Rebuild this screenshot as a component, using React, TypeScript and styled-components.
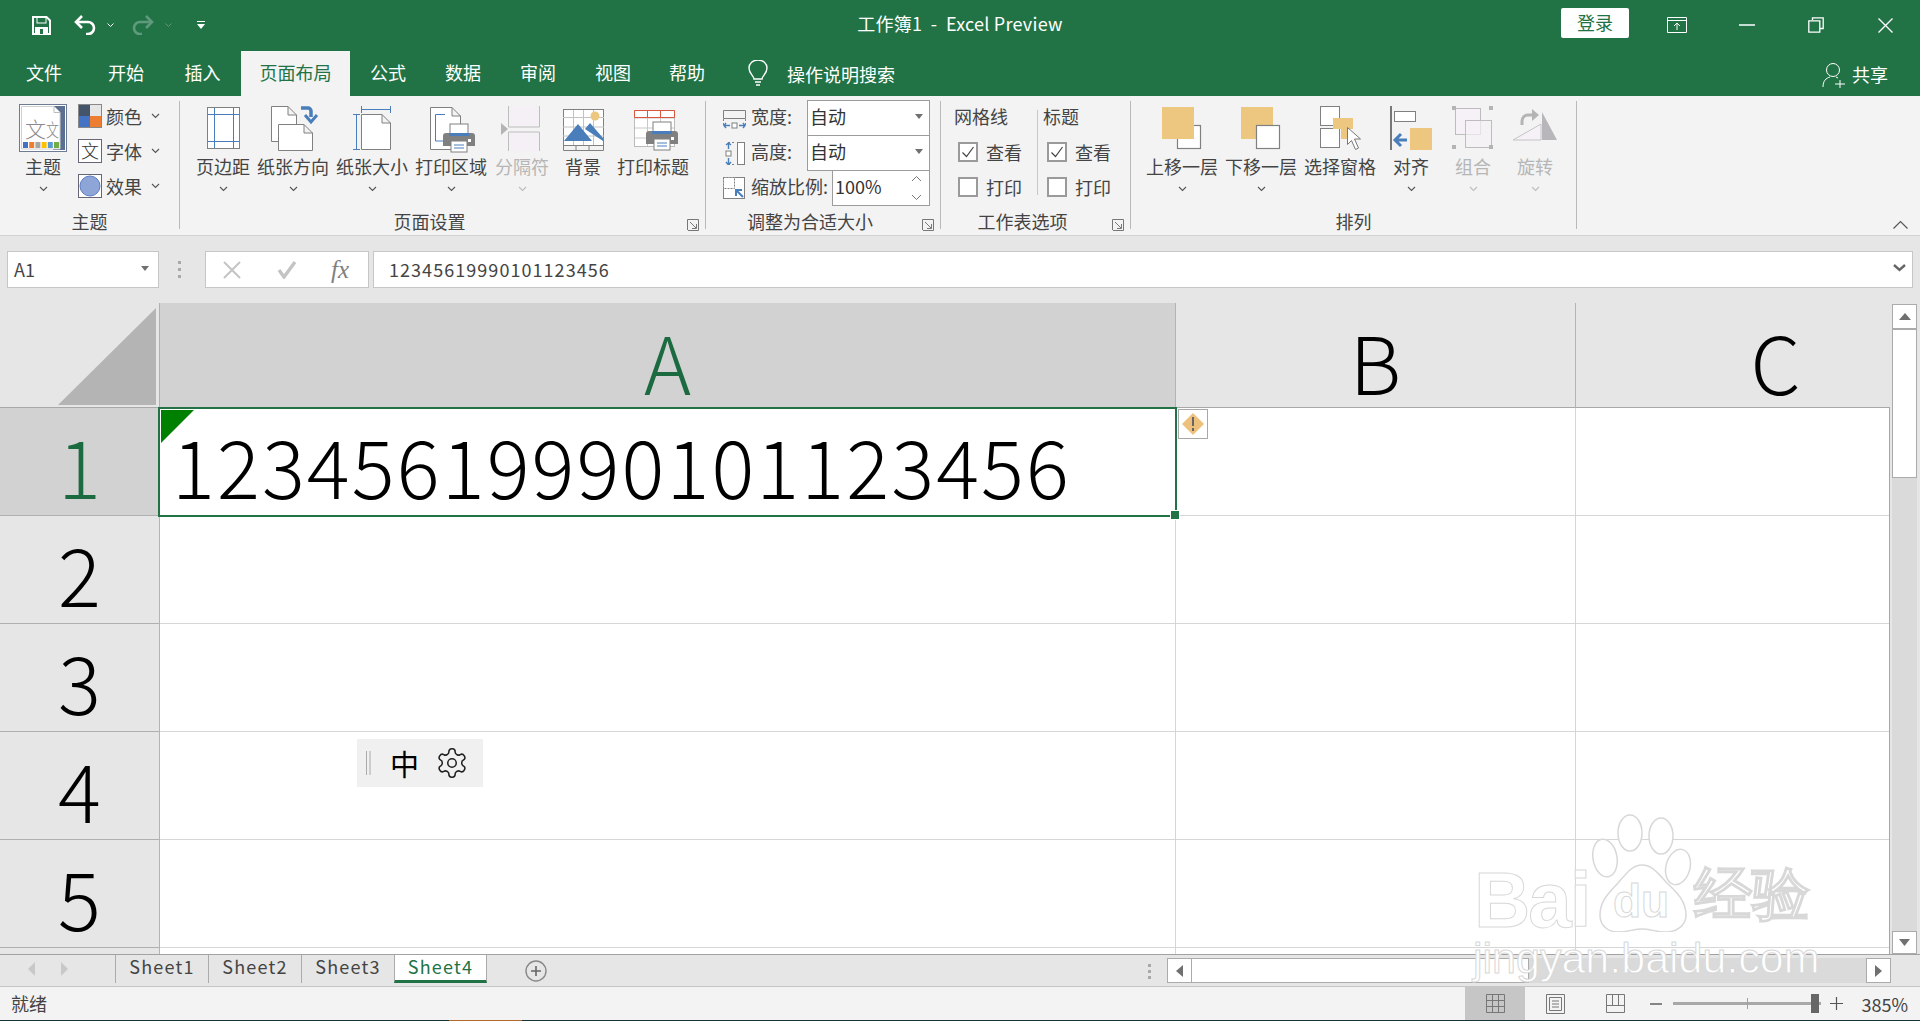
import React from "react";
import styled, { createGlobalStyle } from "styled-components";

const FONT = `"Noto Sans CJK SC", "Noto Sans", sans-serif`;
const GREEN = "#217346";

const Global = createGlobalStyle`
  html, body { margin: 0; padding: 0; overflow: hidden; background: #fff; }
  * { box-sizing: border-box; }
  body { font-family: ${FONT}; }
`;

const Page = styled.div`
  position: relative; width: 1920px; height: 1021px; display: flex; flex-direction: column; overflow: hidden;
  font-family: ${FONT}; font-size: 18px; color: #444;
`;

/* ---------- title bar ---------- */
const TitleBar = styled.div`
  height: 50px; flex: none; background: ${GREEN}; display: grid; grid-template-columns: 1fr auto 1fr; align-items: center; color: #fff;
`;
const QuickBar = styled.div`display: flex; align-items: center; padding-left: 32px; padding-top: 0;`;
const BarIcon = styled.svg<{ $ml?: number }>`display: block; flex: none; margin-left: ${p => p.$ml ?? 0}px;`;
const Title = styled.div`font-size: 18px; line-height: 24px; color: #fff; white-space: pre; margin-top: -5px; letter-spacing: .25px;`;
const WindowControls = styled.div`display: flex; align-items: center; justify-content: flex-end; padding-right: 27px;`;
const LoginButton = styled.div`
  width: 68px; height: 30px; background: #fff; border-radius: 2px; color: ${GREEN}; font-size: 18px; line-height: 29px; text-align: center; margin-top: -4px;
`;

/* ---------- tabs ---------- */
const TabBar = styled.div`height: 46px; flex: none; background: ${GREEN}; display: flex; align-items: flex-end;`;
const Tab = styled.div<{ $w: number; $active?: boolean }>`
  width: ${p => p.$w}px; height: 45px; line-height: 42px; text-align: center; font-size: 18px;
  color: ${p => (p.$active ? GREEN : "#fff")}; background: ${p => (p.$active ? "#f3f3f3" : "transparent")};
`;
const SearchHint = styled.div`display: flex; align-items: center; height: 45px; color: #fff; margin-left: 24px; line-height: 42px;`;
const SearchText = styled.span`margin-left: 19px;`;
const ShareBox = styled.div`display: flex; align-items: center; height: 45px; color: #fff; margin-left: auto; padding-right: 32px; line-height: 42px;`;
const ShareText = styled.span`margin-left: 6px;`;

/* ---------- ribbon ---------- */
const Ribbon = styled.div`
  height: 140px; flex: none; background: #f3f3f3; border-bottom: 1px solid #d2d2d2; display: flex; padding: 5px 0 6px;
`;
const Group = styled.div<{ $w: number }>`
  width: ${p => p.$w}px; flex: none; height: 128px; display: flex; flex-direction: column; border-right: 1px solid #b9b9b9;
`;
const GroupBody = styled.div<{ $pl?: number }>`
  height: 110px; flex: none; display: flex; padding-left: ${p => p.$pl ?? 0}px; padding-top: 2px;
`;
const GroupFooter = styled.div`height: 18px; display: flex; align-items: flex-start;`;
const GroupLabel = styled.div`flex: 1; text-align: center; line-height: 20px; font-size: 18px; color: #444; white-space: nowrap;`;
const Launcher = styled.svg`flex: none; display: block; margin: 8px 6px 0 8px;`;
const BigButton = styled.div<{ $w: number; $off?: boolean }>`
  width: ${p => p.$w}px; flex: none; display: flex; flex-direction: column; align-items: center;
  color: ${p => (p.$off ? "#b6b6b6" : "#444")};
`;
const BigLabel = styled.div`height: 24px; line-height: 24px; margin-top: 1px; white-space: nowrap; font-size: 18px;`;
const ChevronSlot = styled.div`height: 8px; margin-top: 7px; display: flex; align-items: center;`;
const SmallColumn = styled.div`display: flex; flex-direction: column; gap: 11px; padding-top: 1px; margin-left: -1px;`;
const SmallRow = styled.div`display: flex; align-items: center; height: 24px; white-space: nowrap;`;
const SmallText = styled.span`margin-left: 4px; width: 36px;`;
const SmallChevron = styled.span`margin-left: 9px; display: flex;`;
const FitColumn = styled.div`display: flex; flex-direction: column; width: 207px; margin-top: -3px;`;
const FitRow = styled.div`display: flex; align-items: center; height: 35px;`;
const FitLabel = styled.span`margin-left: 5px; flex: 1; white-space: nowrap; padding-bottom: 4px;`;
const SelectBox = styled.div<{ $w: number }>`
  width: ${p => p.$w}px; height: 36px; border: 1px solid #9c9c9c; background: #fff; display: flex; align-items: center; justify-content: space-between;
  padding: 0 6px 3px 2px; font-size: 18px; color: #333;
`;
const SpinArrows = styled.div`display: flex; flex-direction: column; gap: 12px; padding: 3px 1px 0 0;`;
const SheetOptionCol = styled.div<{ $w: number; $pl: number }>`
  width: ${p => p.$w}px; padding-left: ${p => p.$pl}px; display: flex; flex-direction: column;
`;
const OptionHead = styled.div`height: 24px; line-height: 24px; margin: 1px 0 6px; font-size: 18px;`;
const OptionRow = styled.div`display: flex; align-items: center; height: 35px; padding-left: 4px;`;
const CheckBox = styled.div`
  width: 20px; height: 20px; border: 2px solid #9a9a9a; background: #fff; flex: none; display: flex; align-items: center; justify-content: center;
`;
const OptionText = styled.span`margin-left: 8px;`;
const VSep = styled.div`width: 1px; height: 85px; background: #c8c8c8; margin-top: 7px; flex: none;`;
const CollapseSlot = styled.div`flex: 1; display: flex; align-items: flex-end; justify-content: flex-end; padding-right: 12px;`;

/* ---------- formula bar ---------- */
const FormulaBar = styled.div`
  height: 67px; flex: none; background: #e6e6e6; display: flex; align-items: flex-start; padding: 15px 7px 0;
`;
const NameBox = styled.div`
  width: 152px; height: 37px; background: #fff; border: 1px solid #c6c6c6; display: flex; align-items: center; justify-content: space-between;
  padding: 0 9px 2px 6px; font-size: 18px; color: #444;
`;
const Grip = styled.svg`flex: none; margin: 10px 0 0 19px; display: block;`;
const FxBox = styled.div`
  width: 164px; height: 37px; margin-left: 23px; background: #fff; border: 1px solid #c6c6c6; display: flex; align-items: center; padding-left: 17px;
`;
const GhostIcon = styled.svg<{ $ml?: number }>`display: block; flex: none; margin-left: ${p => p.$ml ?? 0}px;`;
const FxText = styled.span`
  font-family: "Liberation Serif", serif; font-style: italic; font-weight: 400; font-size: 25px; color: #808080; margin-left: 34px; line-height: 30px;
`;
const FormulaInput = styled.div`
  flex: 1; height: 37px; margin-left: 4px; background: #fff; border: 1px solid #c6c6c6; display: flex; align-items: center; justify-content: space-between;
  padding: 0 6px 2px 15px; font-size: 18px; letter-spacing: 1.05px; color: #444;
`;

/* ---------- grid ---------- */
const GridWrap = styled.div`height: 651px; flex: none; display: flex; background: #e6e6e6;`;
const SheetArea = styled.div`
  position: relative; width: 1890px; flex: none; overflow: hidden;
  &::after { content: ""; position: absolute; right: 0; top: 105px; bottom: 0; width: 1px; background: #a6a6a6; }
`;
const HeaderRow = styled.div`display: flex; height: 105px;`;
const Corner = styled.div`width: 160px; flex: none; background: #e6e6e6; border-right: 1px solid #b0b0b0; border-bottom: 1px solid #a8a8a8;`;
const CornerArt = styled.svg`display: block;`;
const ColHead = styled.div<{ $w: number; $sel?: boolean }>`
  width: ${p => p.$w}px; flex: none; background: ${p => (p.$sel ? "#d2d2d2" : "#e6e6e6")}; color: ${p => (p.$sel ? "#1c6b40" : "#000")};
  border-right: 1px solid #b4b4b4; border-bottom: 1px solid #a8a8a8; display: flex; align-items: center; justify-content: center;
  font-size: 80px; font-weight: 300; line-height: 1; padding-top: 10px;
`;
const Row = styled.div`display: flex; height: 108px;`;
const RowHead = styled.div<{ $sel?: boolean }>`
  width: 160px; flex: none; background: ${p => (p.$sel ? "#d2d2d2" : "#e6e6e6")}; color: ${p => (p.$sel ? "#1c6b40" : "#000")};
  border-right: 1px solid #b4b4b4; border-bottom: 1px solid #b0b0b0; display: flex; align-items: center; justify-content: center;
  font-size: 80px; font-weight: 300; line-height: 1; padding-top: 4px;
`;
const Cell = styled.div<{ $w: number }>`
  width: ${p => p.$w}px; flex: none; background: #fff; border-right: 1px solid #d6d6d6; border-bottom: 1px solid #d6d6d6; white-space: nowrap;
  display: flex; align-items: center; font-size: 80px; font-weight: 300; line-height: 1; padding: 4px 0 0 12px; letter-spacing: 2.15px; color: #000;
`;
const Selection = styled.div`position: absolute; left: 158px; top: 104px; width: 1019px; height: 110px; border: 2px solid ${GREEN}; pointer-events: none;`;
const FillHandle = styled.div`
  position: absolute; right: -4px; bottom: -4px; width: 8px; height: 8px; background: ${GREEN}; outline: 1px solid #fff;
`;
const ErrorMark = styled.div`position: absolute; left: 161px; top: 107px; width: 0; height: 0; border-style: solid; border-width: 33px 33px 0 0; border-color: #008000 transparent transparent transparent;`;
const SmartTag = styled.div`
  position: absolute; left: 1178px; top: 106px; width: 30px; height: 30px; background: #fff; border: 1px solid #a8a8a8; display: flex; align-items: center; justify-content: center;
`;
const ImeBar = styled.div`
  position: absolute; left: 357px; top: 436px; width: 126px; height: 48px; background: #f0f0f0; display: flex; align-items: center; padding-left: 9px; color: #000;
`;
const ImeChar = styled.span`font-size: 29px; line-height: 40px; margin-left: 19px;`;
const VScroll = styled.div`flex: 1; display: flex; flex-direction: column; padding: 1px 3px 0 2px;`;
const ScrollBtn = styled.div<{ $h: number }>`
  height: ${p => p.$h}px; flex: none; background: #fff; border: 1px solid #ababab; display: flex; align-items: center; justify-content: center;
`;
const VThumb = styled.div`height: 149px; flex: none; background: #fff; border: 1px solid #ababab;`;
const VTrack = styled.div`flex: 1; background: #dadada;`;

/* ---------- sheet tabs ---------- */
const SheetBar = styled.div`
  height: 33px; flex: none; background: #e6e6e6; border-top: 1px solid #a2a2a2; border-bottom: 1px solid #c6c6c6; display: flex; align-items: flex-start;
`;
const SheetNav = styled.div`width: 115px; height: 28px; flex: none; display: flex; align-items: center; padding-left: 28px; gap: 26px;`;
const SheetTab = styled.div<{ $active?: boolean }>`
  width: 93px; height: 28px; flex: none; text-align: center; font-size: 18px; line-height: 23px; letter-spacing: 1.2px;
  color: ${p => (p.$active ? GREEN : "#444")}; background: ${p => (p.$active ? "#fff" : "transparent")};
  border-left: 1px solid #ababab; border-right: ${p => (p.$active ? "1px solid #ababab" : "0")};
  border-bottom: ${p => (p.$active ? `3px solid ${GREEN}` : "0")};
`;
const AddSheet = styled.svg`margin: 5px 0 0 38px; flex: none; display: block;`;
const HScrollWrap = styled.div`margin-left: auto; display: flex; align-items: flex-start; padding: 3px 29px 0 0;`;
const HGrip = styled.svg`display: block; margin: 6px 15px 0 0;`;
const HBtn = styled.div`width: 25px; height: 25px; background: #fff; border: 1px solid #ababab; display: flex; align-items: center; justify-content: center; flex: none;`;
const HThumb = styled.div`width: 337px; height: 25px; background: #fff; border: 1px solid #ababab; border-left: 0; flex: none;`;
const HTrack = styled.div`width: 337px; height: 25px; background: #dadada; flex: none;`;

/* ---------- status bar ---------- */
const StatusBar = styled.div`height: 33px; flex: none; background: #f3f3f3; display: flex; align-items: stretch; padding-left: 11px;`;
const StatusText = styled.div`line-height: 32px; font-size: 18px;`;
const StatusRight = styled.div`margin-left: auto; display: flex; align-items: center; padding-right: 12px;`;
const ViewBtn = styled.div<{ $active?: boolean; $w: number }>`
  width: ${p => p.$w}px; height: 33px; display: flex; align-items: center; justify-content: center; background: ${p => (p.$active ? "#c6c6c6" : "transparent")};
`;
const ZoomMinus = styled.svg`display: block; margin-left: 5px;`;
const ZoomSlider = styled.div`position: relative; width: 148px; height: 3px; background: #a8a8a8; margin: 0 9px 0 11px;`;
const ZoomTick = styled.div`position: absolute; left: 74px; top: -4px; width: 1px; height: 11px; background: #a0a0a0;`;
const ZoomThumb = styled.div`position: absolute; left: 138px; top: -8px; width: 8px; height: 19px; background: #666;`;
const ZoomText = styled.span`margin-left: 18px; font-size: 18px;`;
const TaskEdge = styled.div`height: 1px; flex: none; display: flex; background: #18323a;`;
const TaskActive = styled.div`width: 73px; margin-left: 449px; background: #b36a28;`;

/* ---------- watermark ---------- */
const Watermark = styled.div`position: absolute; left: 1460px; top: 805px; width: 370px; height: 180px; pointer-events: none; font-family: "Liberation Sans", sans-serif;`;
const Mark = styled.span<{ $l: number; $t: number; $s: number; $b?: boolean; $ls?: number }>`
  position: absolute; left: ${p => p.$l}px; top: ${p => p.$t}px; font-size: ${p => p.$s}px; line-height: 1; white-space: nowrap;
  font-weight: ${p => (p.$b ? 700 : 400)}; letter-spacing: ${p => p.$ls ?? 0}px; color: #fff; -webkit-text-stroke: 1px #d8d8d8;
`;
const PawSvg = styled.svg`position: absolute; left: 130px; top: 5px;`;

/* ---------- icon drawings ---------- */
const G = "#808080";
const BLUE = "#4a7ebb";
const OR = "#edc77f";

const Chev = ({ off }: { off?: boolean }) => (
  <svg width="9" height="6" viewBox="0 0 9 6"><path d="M1 1l3.5 3.5L8 1" fill="none" stroke={off ? "#bdbdbd" : "#555"} strokeWidth="1.1" /></svg>
);

const Page_ = ({ x, y, w, h, f = 9 }: { x: number; y: number; w: number; h: number; f?: number }) => (
  <path d={`M${x + .5} ${y + .5}H${x + w - f}L${x + w - .5} ${y + f}V${y + h - .5}H${x + .5}ZM${x + w - f} ${y + .5}V${y + f}H${x + w - .5}`} fill="#fff" stroke={G} />
);

const Printer = ({ x, y }: { x: number; y: number }) => (
  <g transform={`translate(${x} ${y})`}>
    <rect x="7" y="0" width="18" height="13" fill="#fff" stroke={G} />
    <path d="M3 9h26a3 3 0 0 1 3 3v10H0V12a3 3 0 0 1 3-3z" fill={G} />
    <rect x="6" y="9" width="20" height="3" fill={BLUE} />
    <rect x="25" y="15" width="3" height="3" fill="#fff" />
    <rect x="8" y="17" width="16" height="11" fill="#fff" stroke={G} />
    <path d="M11 21h10M11 24h10" stroke={BLUE} />
  </g>
);

const IconSvg = styled.svg`display: block; flex: none;`;
const Ico = ({ children }: { children: React.ReactNode }) => <IconSvg width="60" height="50" viewBox="0 0 60 50">{children}</IconSvg>;

const ThemeIcon = () => (
  <Ico>
    <rect x="6.5" y="1.5" width="47" height="47" fill="#fff" stroke="#6d7c94" />
    <rect x="40" y="3" width="12" height="44" fill="#5a6f91" />
    <path d="M8.5 3.5H41l6 6V46H8.5Z" fill="#fff" stroke="#d0d0d0" />
    <path d="M41 3.5v6h6" fill="#fff" stroke="#bbb" />
    <text x="12" y="34" fontSize="21" fontWeight="300" fill="#8a8a8a" fontFamily={FONT}>文</text>
    <text x="33" y="34" fontSize="18" fontWeight="300" fill="#8a8a8a" fontFamily={FONT} textLength="13" lengthAdjust="spacingAndGlyphs">文</text>
    {["#4472c4", "#ed7d31", "#a5a5a5", "#ffc000", "#5b9bd5", "#70ad47"].map((c, i) => (
      <rect key={c} x={10 + i * 6.2} y="39" width="5" height="6" fill={c} />
    ))}
  </Ico>
);
const MarginsIcon = () => (
  <Ico>
    <rect x="14.5" y="4.5" width="32" height="41" fill="#fff" stroke={G} />
    <path d="M21.5 5v40M40.5 5v40M15 11.5h31M15 38.5h31" stroke={BLUE} />
  </Ico>
);
const OrientIcon = () => (
  <Ico>
    <Page_ x={8} y={3} w={26} h={36} />
    <Page_ x={15} y={21} w={35} h={27} />
    <path d="M38 5h7a3 3 0 0 1 3 3v6" fill="none" stroke={BLUE} strokeWidth="3.5" />
    <path d="M42 12l6 7 6-7" fill="none" stroke={BLUE} strokeWidth="3" />
  </Ico>
);
const SizeIcon = () => (
  <Ico>
    <Page_ x={19} y={11} w={30} h={36} />
    <path d="M19 6.5h29M19.5 3v7M48.5 3v7M14.5 11v36M11 11.5h7M11 46.5h7" stroke={BLUE} fill="none" />
  </Ico>
);
const AreaIcon = () => (
  <Ico>
    <Page_ x={9} y={4} w={31} h={43} />
    <path d="M24 11.5H14.5V38H22" fill="none" stroke={BLUE} />
    <Printer x={22} y={21} />
  </Ico>
);
const BreakIcon = () => (
  <Ico>
    <path d="M16.5 3V24H47.5V3" fill="#f4f0f6" stroke="#bdbdbd" />
    <path d="M16.5 48V29H47.5V48" fill="#f4f0f6" stroke="#bdbdbd" />
    <path d="M9 20l7 6-7 6z" fill="#b4b4b4" />
  </Ico>
);
const PictureIcon = () => (
  <Ico>
    <rect x="10.5" y="6.5" width="40" height="36" fill="#fff" stroke={G} />
    <path d="M10 14.5h41M10 24h41M10 33h41M20.5 7v35M30.5 7v35M40.5 7v35" stroke="#c2c2c2" />
    <circle cx="42" cy="13" r="4.5" fill={OR} />
    <path d="M11 38l14-17 14 17zM32 26l5-6 13 15v3z" fill={BLUE} />
    <path d="M10.5 42.5h40v5h-40zM23 43v4M36 43v4" fill="none" stroke={G} />
  </Ico>
);
const TitlesIcon = () => (
  <Ico>
    <rect x="11.5" y="7.5" width="40" height="36" fill="#fff" stroke="#bbb" />
    <path d="M12 15h39M12 25h39M12 35h39M24.5 8v35M37.5 8v35" stroke="#c8c8c8" />
    <path d="M11.5 14.5V7.5h40v7zM24.5 8v6M37.5 8v6" fill="none" stroke="#d9573d" />
    <Printer x={23} y={19} />
  </Ico>
);
const ForwardIcon = () => (
  <Ico>
    <rect x="25.5" y="22.5" width="23" height="23" fill="#fff" stroke={G} strokeWidth="1.2" />
    <rect x="10" y="4" width="32" height="32" fill={OR} />
  </Ico>
);
const BackwardIcon = () => (
  <Ico>
    <rect x="10" y="4" width="32" height="32" fill={OR} />
    <rect x="25.5" y="22.5" width="23" height="23" fill="#fff" stroke={G} strokeWidth="1.2" />
  </Ico>
);
const PaneIcon = () => (
  <Ico>
    <rect x="10.5" y="3.5" width="19" height="19" fill="#fff" stroke={G} />
    <rect x="10.5" y="25.5" width="19" height="19" fill="#fff" stroke={G} />
    <rect x="23" y="15" width="20" height="11" fill={OR} />
    <rect x="31" y="26" width="6" height="10" fill={OR} />
    <path d="M37.5 24.5v17l4-4 4 9 3-1.5-4-9h6z" fill="#fff" stroke="#777" />
  </Ico>
);
const AlignIcon = () => (
  <Ico>
    <rect x="9" y="3" width="2" height="44" fill="#777" />
    <rect x="13.5" y="8.5" width="21" height="10" fill="#fff" stroke={G} />
    <rect x="29" y="25" width="22" height="22" fill={OR} />
    <path d="M26 37H15M20 31l-6 6 6 6" fill="none" stroke={BLUE} strokeWidth="3" />
  </Ico>
);
const GroupIcon = () => (
  <Ico>
    <rect x="12.5" y="5.5" width="25" height="26" fill="#f5f1f7" stroke="#bdbdbd" />
    <rect x="22.5" y="17.5" width="26" height="27" fill="#f5f1f7" fillOpacity=".7" stroke="#bdbdbd" />
    {[[9, 3], [46, 3], [9, 42], [46, 42]].map(([x, y]) => <rect key={`${x}${y}`} x={x} y={y} width="4" height="4" fill="#b4b4b4" />)}
  </Ico>
);
const RotateIcon = () => (
  <Ico>
    <path d="M8 37L36 21V37Z" fill="#f5f1f7" stroke="#c4c4c4" />
    <path d="M37 9L52 37H37Z" fill="#b8b6ba" />
    <path d="M17 22v-4a6 6 0 0 1 6-6h6" fill="none" stroke="#b4b4b4" strokeWidth="3" />
    <path d="M27 6l7 6-7 6z" fill="#b4b4b4" />
  </Ico>
);
const QuickIcon = ({ children, w = 24 }: { children: React.ReactNode; w?: number }) => <IconSvg width={w} height="24" viewBox={`0 0 ${w} 24`}>{children}</IconSvg>;
const Spin = ({ up }: { up?: boolean }) => (
  <svg width="11" height="7" viewBox="0 0 11 7"><path d={up ? "M1 6l4.5-4.5L10 6" : "M1 1l4.5 4.5L10 1"} fill="none" stroke="#777" /></svg>
);
const Dropdown = () => <svg width="8" height="5" viewBox="0 0 8 5"><path d="M0 0h8L4 5z" fill="#707070" /></svg>;
const DialogMark = () => (
  <Launcher width="12" height="12" viewBox="0 0 12 12"><path d="M.5 11V.5H11.5V11.5H1M3 3l6 6M5 9.5h4.5V5" fill="none" stroke="#777" /></Launcher>
);
const Check = () => <svg width="14" height="14" viewBox="0 0 14 14"><path d="M1.5 7.5l4 4L12.5 2" fill="none" stroke="#444" strokeWidth="1.2" /></svg>;

const bigGroup2: [number, string, React.FC, boolean?][] = [
  [60, "页边距", MarginsIcon], [80, "纸张方向", OrientIcon], [78, "纸张大小", SizeIcon], [80, "打印区域", AreaIcon],
  [62, "分隔符", BreakIcon, true], [60, "背景", PictureIcon], [80, "打印标题", TitlesIcon],
];
const bigGroup5: [number, string, React.FC, boolean?][] = [
  [80, "上移一层", ForwardIcon], [78, "下移一层", BackwardIcon], [80, "选择窗格", PaneIcon], [62, "对齐", AlignIcon],
  [62, "组合", GroupIcon, true], [62, "旋转", RotateIcon, true],
];
const noChevron = new Set(["背景", "打印标题", "选择窗格"]);

const Big = ({ w, label, Icon, off }: { w: number; label: string; Icon: React.FC; off?: boolean }) => (
  <BigButton $w={w} $off={off}>
    <Icon />
    <BigLabel>{label}</BigLabel>
    {!noChevron.has(label) && <ChevronSlot><Chev off={off} /></ChevronSlot>}
  </BigButton>
);

const tabs: [string, number][] = [["文件", 88], ["开始", 76], ["插入", 77], ["页面布局", 109], ["公式", 76], ["数据", 74], ["审阅", 76], ["视图", 74], ["帮助", 74]];

export default function App() {
  return (
    <Page>
      <Global />
      <TitleBar>
        <QuickBar>
          <BarIcon width="19" height="19" viewBox="0 0 19 19"><path d="M1 1h13.5L18 4.5V18H1z" fill="none" stroke="#fff" strokeWidth="2" /><rect x="5" y="1" width="9" height="6" fill="none" stroke="#fff" strokeWidth="1" /><path d="M3 11h13v7H3z" fill="#fff" /><rect x="8" y="13" width="3" height="5" fill="#217346" /></BarIcon>
          <BarIcon $ml={23} width="22" height="20" viewBox="0 0 22 20"><path d="M2 7h12a6 6 0 0 1 0 12h-2" fill="none" stroke="#fff" strokeWidth="2.6" /><path d="M8 1L2 7l6 6" fill="none" stroke="#fff" strokeWidth="2.6" /></BarIcon>
          <BarIcon $ml={11} width="7" height="5" viewBox="0 0 7 5"><path d="M.5.5l3 3 3-3" fill="none" stroke="#fff" /></BarIcon>
          <BarIcon $ml={18} width="22" height="20" viewBox="0 0 22 20"><path d="M20 7H8a6 6 0 0 0 0 12h2" fill="none" stroke="#5f9a7c" strokeWidth="2.6" /><path d="M14 1l6 6-6 6" fill="none" stroke="#5f9a7c" strokeWidth="2.6" /></BarIcon>
          <BarIcon $ml={11} width="7" height="5" viewBox="0 0 7 5"><path d="M.5.5l3 3 3-3" fill="none" stroke="#5f9a7c" /></BarIcon>
          <BarIcon $ml={25} width="8" height="9" viewBox="0 0 8 9"><path d="M0 0h8v1H0zM0 3h8L4 8z" fill="#fff" /></BarIcon>
        </QuickBar>
        <Title>工作簿1  -  Excel Preview</Title>
        <WindowControls>
          <LoginButton>登录</LoginButton>
          <BarIcon $ml={38} width="20" height="16" viewBox="0 0 20 16"><path d="M.5.5h19v15H.5zM1 3.5h18M10 13V6M7 9l3-3 3 3" fill="none" stroke="#fff" /></BarIcon>
          <BarIcon $ml={52} width="16" height="2" viewBox="0 0 16 2"><path d="M0 1h16" stroke="#fff" strokeWidth="1.5" /></BarIcon>
          <BarIcon $ml={53} width="16" height="16" viewBox="0 0 16 16"><path d="M4.5 3V.8h10.7v10.7H12.5M.8 3.8h11v11.4H.8z" fill="none" stroke="#fff" strokeWidth="1.3" /></BarIcon>
          <BarIcon $ml={54} width="15" height="15" viewBox="0 0 15 15"><path d="M.5.5l14 14M14.5.5l-14 14" stroke="#fff" strokeWidth="1.4" /></BarIcon>
        </WindowControls>
      </TitleBar>

      <TabBar>
        {tabs.map(([t, w]) => <Tab key={t} $w={w} $active={t === "页面布局"}>{t}</Tab>)}
        <SearchHint>
          <svg width="20" height="28" viewBox="0 0 20 28"><path d="M6 19c0-3-5-5-5-11a9 8 0 0 1 18 0c0 6-5 8-5 11zM7 22h6M8 25h4" fill="none" stroke="#fff" strokeWidth="1.4" /></svg>
          <SearchText>操作说明搜索</SearchText>
        </SearchHint>
        <ShareBox>
          <svg width="24" height="28" viewBox="0 0 24 28"><circle cx="11" cy="10" r="6.5" fill="none" stroke="#fff" /><path d="M1 27c0-6 3-9 7-10M14 17l2 1M18 20v8M13 24h10" fill="none" stroke="#fff" /></svg>
          <ShareText>共享</ShareText>
        </ShareBox>
      </TabBar>

      <Ribbon>
        <Group $w={180}>
          <GroupBody $pl={7}>
            <Big w={72} label="主题" Icon={ThemeIcon} />
            <SmallColumn>
              <SmallRow>
                <QuickIcon><rect width="24" height="24" fill="#888" /><rect x="1" y="1" width="11" height="11" fill="#44546a" /><rect x="12" y="1" width="11" height="11" fill="#e7e6e6" /><rect x="1" y="12" width="11" height="11" fill="#4472c4" /><rect x="12" y="12" width="11" height="11" fill="#ed7d31" /></QuickIcon>
                <SmallText>颜色</SmallText><SmallChevron><Chev /></SmallChevron>
              </SmallRow>
              <SmallRow>
                <QuickIcon><rect x=".5" y=".5" width="23" height="23" fill="#fff" stroke="#667" /><text x="3" y="19" fontSize="18" fontWeight="300" fill="#333" fontFamily={FONT}>文</text></QuickIcon>
                <SmallText>字体</SmallText><SmallChevron><Chev /></SmallChevron>
              </SmallRow>
              <SmallRow>
                <QuickIcon><rect x=".5" y=".5" width="23" height="23" fill="#fff" stroke="#667" /><circle cx="12" cy="12" r="10" fill="#8ea5d8" stroke="#5c7fc4" /></QuickIcon>
                <SmallText>效果</SmallText><SmallChevron><Chev /></SmallChevron>
              </SmallRow>
            </SmallColumn>
          </GroupBody>
          <GroupFooter><GroupLabel>主题</GroupLabel></GroupFooter>
        </Group>

        <Group $w={526}>
          <GroupBody $pl={13}>
            {bigGroup2.map(([w, label, Icon, off]) => <Big key={label} w={w} label={label} Icon={Icon} off={off} />)}
          </GroupBody>
          <GroupFooter><GroupLabel>页面设置</GroupLabel><DialogMark /></GroupFooter>
        </Group>

        <Group $w={235}>
          <GroupBody $pl={17}>
            <FitColumn>
              <FitRow>
                <QuickIcon w={23}><path d="M.5 4.5h22v8M.5 4.5v8M.5 12.5h22" fill="none" stroke={G} /><path d="M.5 13v7M22.5 13v7" stroke={G} strokeDasharray="2 2" /><rect x="9" y="17" width="5" height="5" fill="#fff" stroke={G} /><path d="M1 19.5h6M22 19.5h-6M3 17l-2 2.5L3 22M20 17l2 2.5L20 22" fill="none" stroke={BLUE} strokeWidth="1.4" /></QuickIcon>
                <FitLabel>宽度:</FitLabel>
                <SelectBox $w={123}>自动<Dropdown /></SelectBox>
              </FitRow>
              <FitRow>
                <QuickIcon w={23}><rect x="14.5" y="1.5" width="7" height="22" fill="#fff" stroke={G} /><path d="M5 1.5h8M5 23.5h8" stroke={G} strokeDasharray="2 2" /><rect x="3" y="10" width="5" height="5" fill="#fff" stroke={G} /><path d="M5.5 2v6M5.5 24v-7M3 4l2.5-2L8 4M3 21l2.5 3L8 21" fill="none" stroke={BLUE} strokeWidth="1.4" /></QuickIcon>
                <FitLabel>高度:</FitLabel>
                <SelectBox $w={123}>自动<Dropdown /></SelectBox>
              </FitRow>
              <FitRow>
                <QuickIcon w={23}><rect x=".5" y="1.5" width="21" height="21" fill="#fff" stroke={G} /><rect x=".5" y="1.5" width="11" height="11" fill="#fff" stroke={G} strokeDasharray="2 1" /><path d="M20 21l-6-6M13 20v-6h6" fill="none" stroke={BLUE} strokeWidth="2" /></QuickIcon>
                <FitLabel>缩放比例:</FitLabel>
                <SelectBox $w={98}>100%<SpinArrows><Spin up /><Spin /></SpinArrows></SelectBox>
              </FitRow>
            </FitColumn>
          </GroupBody>
          <GroupFooter><GroupLabel>调整为合适大小</GroupLabel><DialogMark /></GroupFooter>
        </Group>

        <Group $w={190}>
          <GroupBody>
            <SheetOptionCol $w={96} $pl={13}>
              <OptionHead>网格线</OptionHead>
              <OptionRow><CheckBox><Check /></CheckBox><OptionText>查看</OptionText></OptionRow>
              <OptionRow><CheckBox /><OptionText>打印</OptionText></OptionRow>
            </SheetOptionCol>
            <VSep />
            <SheetOptionCol $w={80} $pl={5}>
              <OptionHead>标题</OptionHead>
              <OptionRow><CheckBox><Check /></CheckBox><OptionText>查看</OptionText></OptionRow>
              <OptionRow><CheckBox /><OptionText>打印</OptionText></OptionRow>
            </SheetOptionCol>
          </GroupBody>
          <GroupFooter><GroupLabel>工作表选项</GroupLabel><DialogMark /></GroupFooter>
        </Group>

        <Group $w={446}>
          <GroupBody $pl={11}>
            {bigGroup5.map(([w, label, Icon, off]) => <Big key={label} w={w} label={label} Icon={Icon} off={off} />)}
          </GroupBody>
          <GroupFooter><GroupLabel>排列</GroupLabel></GroupFooter>
        </Group>
        <CollapseSlot>
          <svg width="15" height="9" viewBox="0 0 15 9"><path d="M.5 8.5l7-7 7 7" fill="none" stroke="#555" strokeWidth="1.2" /></svg>
        </CollapseSlot>
      </Ribbon>

      <FormulaBar>
        <NameBox>A1<Dropdown /></NameBox>
        <Grip width="4" height="18" viewBox="0 0 4 18"><path d="M0 0h3v3H0zM0 7h3v3H0zM0 14h3v3H0z" fill="#a8a8a8" /></Grip>
        <FxBox>
          <GhostIcon width="18" height="18" viewBox="0 0 18 18"><path d="M1 1l16 16M17 1L1 17" stroke="#c4c4c4" strokeWidth="2" /></GhostIcon>
          <GhostIcon $ml={36} width="20" height="18" viewBox="0 0 20 18"><path d="M2 9l5 7L18 1" fill="none" stroke="#c4c4c4" strokeWidth="3.4" /></GhostIcon>
          <FxText>fx</FxText>
        </FxBox>
        <FormulaInput>
          12345619990101123456
          <svg width="13" height="9" viewBox="0 0 13 9"><path d="M1 1l5.5 5 5.5-5" fill="none" stroke="#666" strokeWidth="2.4" /></svg>
        </FormulaInput>
      </FormulaBar>

      <GridWrap>
        <SheetArea>
          <HeaderRow>
            <Corner>
              <CornerArt width="159" height="104" viewBox="0 0 159 104"><path d="M58 102L156 5V102Z" fill="#b4b4b4" /></CornerArt>
            </Corner>
            <ColHead $w={1016} $sel>A</ColHead>
            <ColHead $w={400}>B</ColHead>
            <ColHead $w={400}>C</ColHead>
          </HeaderRow>
          {[1, 2, 3, 4, 5, 6].map(n => (
            <Row key={n}>
              <RowHead $sel={n === 1}>{n < 6 ? n : ""}</RowHead>
              <Cell $w={1016}>{n === 1 ? "12345619990101123456" : ""}</Cell>
              <Cell $w={400} />
              <Cell $w={400} />
            </Row>
          ))}
          <ErrorMark />
          <Selection><FillHandle /></Selection>
          <SmartTag>
            <svg width="22" height="22" viewBox="0 0 22 22"><path d="M11 0l11 11-11 11L0 11z" fill="#edc17c" /><path d="M11 4v9M11 15v3" stroke="#666" strokeWidth="2" /></svg>
          </SmartTag>
          <ImeBar>
            <svg width="5" height="24" viewBox="0 0 5 24"><path d="M.5 0v24M4 0v24" stroke="#aaa" /></svg>
            <ImeChar>中</ImeChar>
            <GhostIcon $ml={16} width="34" height="34" viewBox="0 0 24 24" fill="none" stroke="#222" strokeWidth="1.1"><path d="M12.22 2h-.44a2 2 0 0 0-2 2v.18a2 2 0 0 1-1 1.73l-.43.25a2 2 0 0 1-2 0l-.15-.08a2 2 0 0 0-2.73.73l-.22.38a2 2 0 0 0 .73 2.73l.15.1a2 2 0 0 1 1 1.72v.51a2 2 0 0 1-1 1.74l-.15.09a2 2 0 0 0-.73 2.73l.22.38a2 2 0 0 0 2.73.73l.15-.08a2 2 0 0 1 2 0l.43.25a2 2 0 0 1 1 1.73V20a2 2 0 0 0 2 2h.44a2 2 0 0 0 2-2v-.18a2 2 0 0 1 1-1.73l.43-.25a2 2 0 0 1 2 0l.15.08a2 2 0 0 0 2.73-.73l.22-.39a2 2 0 0 0-.73-2.73l-.15-.08a2 2 0 0 1-1-1.74v-.5a2 2 0 0 1 1-1.74l.15-.09a2 2 0 0 0 .73-2.73l-.22-.38a2 2 0 0 0-2.73-.73l-.15.08a2 2 0 0 1-2 0l-.43-.25a2 2 0 0 1-1-1.73V4a2 2 0 0 0-2-2z" /><circle cx="12" cy="12" r="3" /></GhostIcon>
          </ImeBar>
        </SheetArea>
        <VScroll>
          <ScrollBtn $h={25}><svg width="12" height="7" viewBox="0 0 12 7"><path d="M0 7L6 0l6 7z" fill="#707070" /></svg></ScrollBtn>
          <VThumb />
          <VTrack />
          <ScrollBtn $h={23}><svg width="11" height="7" viewBox="0 0 11 7"><path d="M0 0h11L5.5 7z" fill="#707070" /></svg></ScrollBtn>
        </VScroll>
      </GridWrap>

      <SheetBar>
        <SheetNav>
          <svg width="7" height="14" viewBox="0 0 7 14"><path d="M7 0v14L0 7z" fill="#c8c8c8" /></svg>
          <svg width="7" height="14" viewBox="0 0 7 14"><path d="M0 0v14l7-7z" fill="#c8c8c8" /></svg>
        </SheetNav>
        <SheetTab>Sheet1</SheetTab>
        <SheetTab>Sheet2</SheetTab>
        <SheetTab>Sheet3</SheetTab>
        <SheetTab $active>Sheet4</SheetTab>
        <AddSheet width="22" height="22" viewBox="0 0 22 22"><circle cx="11" cy="11" r="10" fill="none" stroke="#888" strokeWidth="1.4" /><path d="M11 6v10M6 11h10" stroke="#666" strokeWidth="1.6" /></AddSheet>
        <HScrollWrap>
          <HGrip width="4" height="16" viewBox="0 0 4 16"><path d="M0 0h3v3H0zM0 6h3v3H0zM0 12h3v3H0z" fill="#a8a8a8" /></HGrip>
          <HBtn><svg width="7" height="12" viewBox="0 0 7 12"><path d="M7 0v12L0 6z" fill="#707070" /></svg></HBtn>
          <HThumb />
          <HTrack />
          <HBtn><svg width="7" height="12" viewBox="0 0 7 12"><path d="M0 0v12l7-6z" fill="#707070" /></svg></HBtn>
        </HScrollWrap>
      </SheetBar>

      <StatusBar>
        <StatusText>就绪</StatusText>
        <StatusRight>
          <ViewBtn $w={60} $active>
            <svg width="19" height="19" viewBox="0 0 19 19"><path d="M.5.5h18v18H.5zM.5 6.5h18M.5 12.5h18M6.5.5v18M12.5.5v18" fill="none" stroke="#777" /></svg>
          </ViewBtn>
          <ViewBtn $w={60}>
            <svg width="19" height="20" viewBox="0 0 19 20"><path d="M.5.5h18v19H.5zM3.5 3.5h12v13h-12zM6 7h7M6 10h7M6 13h7" fill="none" stroke="#777" /></svg>
          </ViewBtn>
          <ViewBtn $w={60}>
            <svg width="19" height="19" viewBox="0 0 19 19"><path d="M.5.5h18v18H.5zM.5 11.5h18M6.5.5v11M12.5.5v11" fill="none" stroke="#777" /></svg>
          </ViewBtn>
          <ZoomMinus width="12" height="2" viewBox="0 0 12 2"><path d="M0 1h12" stroke="#555" strokeWidth="1.4" /></ZoomMinus>
          <ZoomSlider><ZoomTick /><ZoomThumb /></ZoomSlider>
          <svg width="13" height="13" viewBox="0 0 13 13"><path d="M6.5 0v13M0 6.5h13" stroke="#555" strokeWidth="1.2" /></svg>
          <ZoomText>385%</ZoomText>
        </StatusRight>
      </StatusBar>
      <TaskEdge><TaskActive /></TaskEdge>

      <Watermark>
        <Mark $l={14} $t={56} $s={78} $b $ls={-2}>Bai</Mark>
        <PawSvg width="110" height="122" viewBox="0 0 110 122">
          <g fill="#fff" stroke="#d8d8d8" strokeWidth="1.5">
            <ellipse cx="40" cy="23" rx="12" ry="18" />
            <ellipse cx="71" cy="26" rx="12" ry="18" />
            <ellipse cx="15" cy="48" rx="12" ry="19" transform="rotate(-10 15 48)" />
            <ellipse cx="88" cy="57" rx="12" ry="18" transform="rotate(15 88 57)" />
            <path d="M52 55c10 0 16 8 24 17 9 9 20 18 20 33 0 11-10 17-20 17-10 0-16-3-24-3s-14 3-24 3c-11 0-18-7-18-17 0-15 10-23 18-32 8-9 14-18 24-18z" />
          </g>
        </PawSvg>
        <Mark $l={153} $t={73} $s={46} $b>du</Mark>
        <Mark $l={234} $t={60} $s={58} $b>经验</Mark>
        <Mark $l={13} $t={132} $s={43}>jingyan.baidu.com</Mark>
      </Watermark>
    </Page>
  );
}
